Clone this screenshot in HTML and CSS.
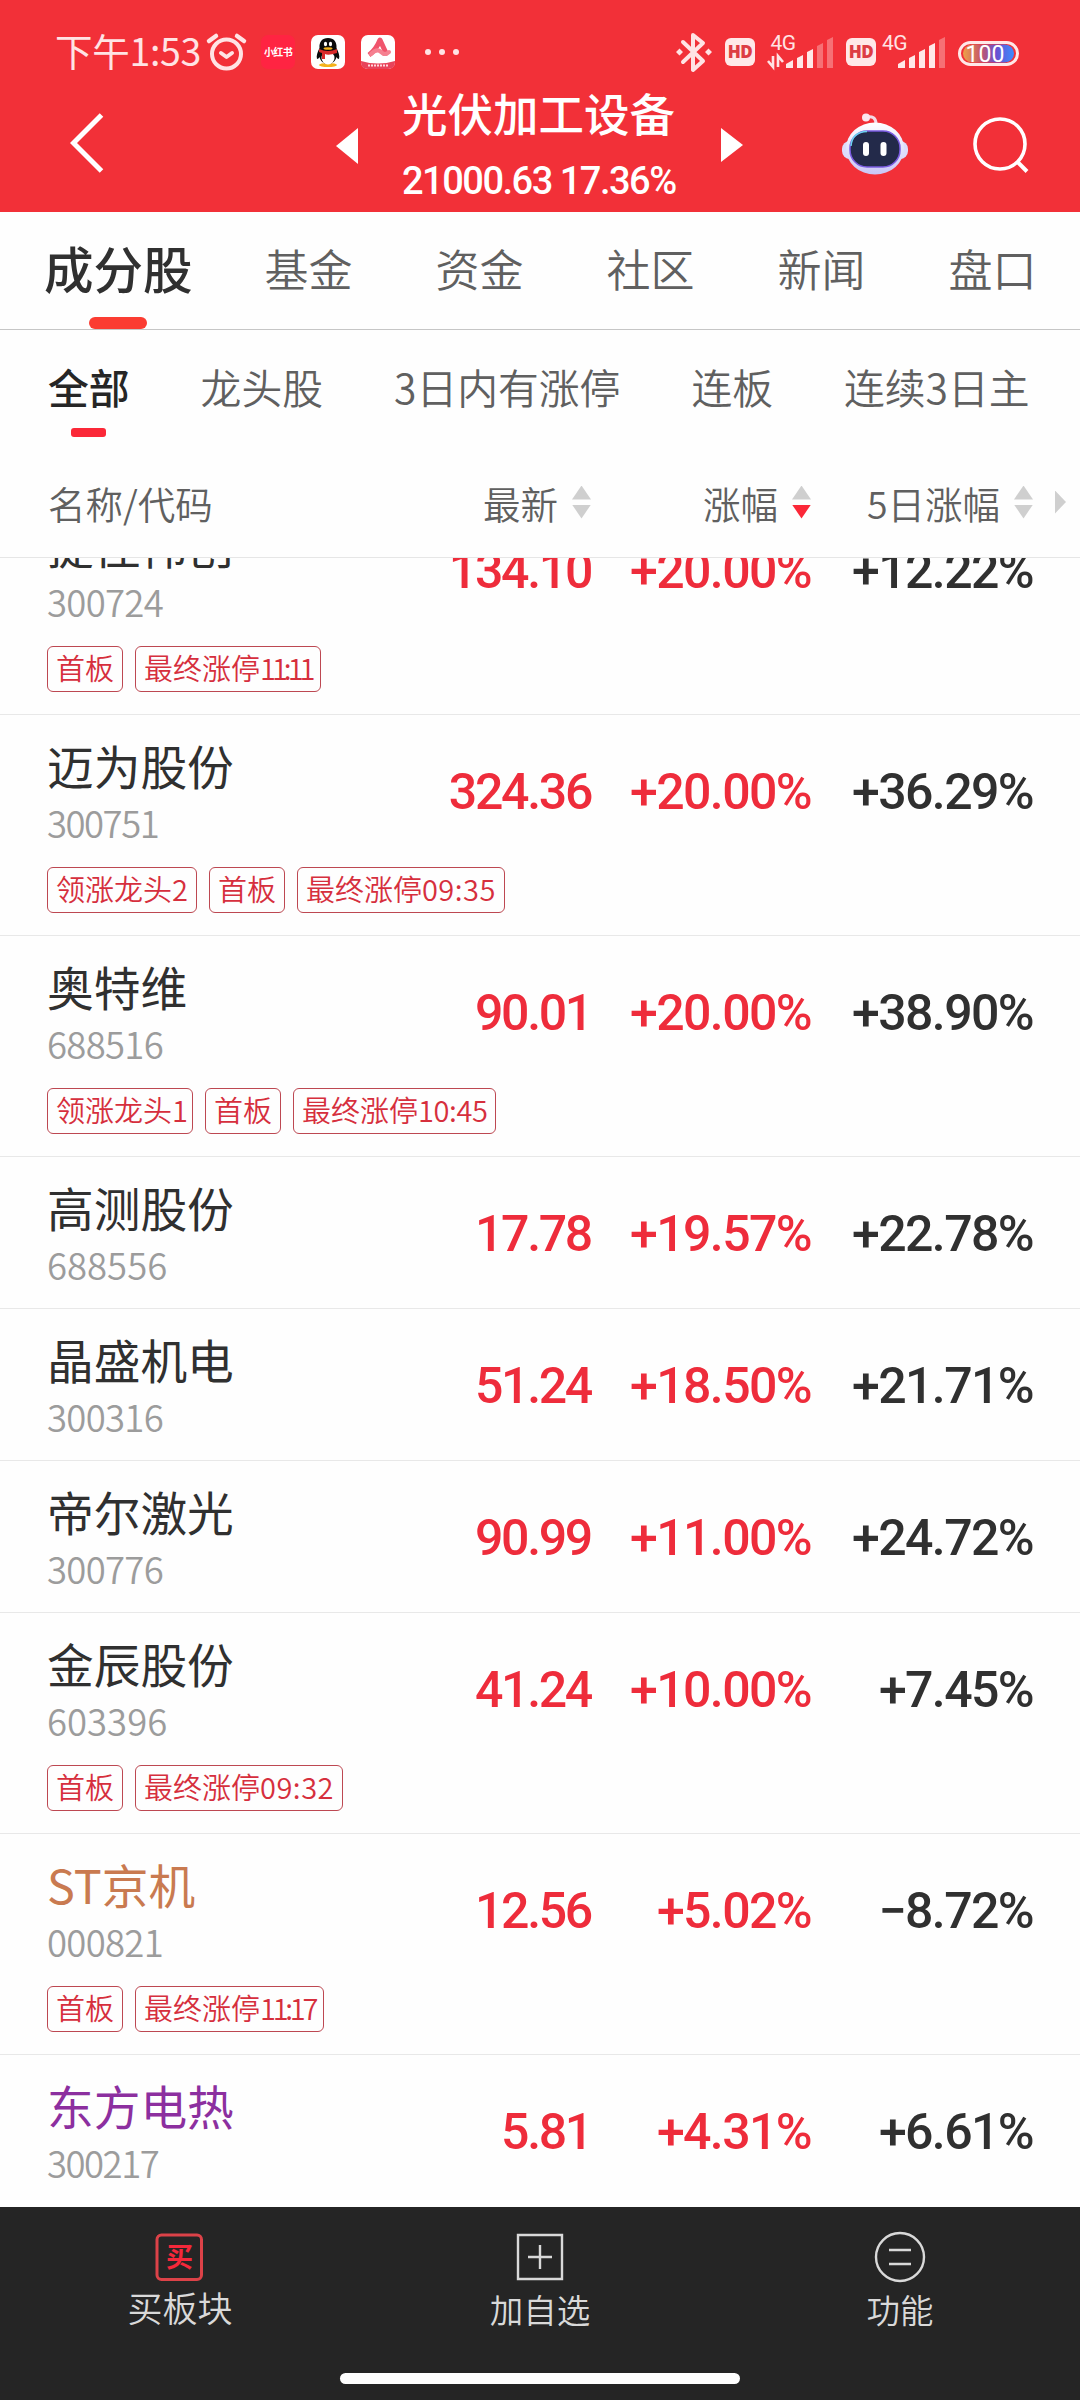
FILE: index.html
```html
<!DOCTYPE html>
<html lang="zh-CN">
  <head>
    <meta charset="UTF-8" />
    <meta name="viewport" content="width=device-width, initial-scale=1.0" />
    <title>光伏加工设备</title>
    <link rel="stylesheet" href="styles.css">
  </head>
  <body>
    <div class="header">
      <!-- status bar -->
      <div class="status">
        <span class="time">下午1:53</span>
        <svg class="status-left" width="260" height="44" viewBox="204 30 260 44">
          <g fill="none" stroke="#ffe3e4" stroke-width="4" stroke-linecap="round" stroke-linejoin="round">
            <circle cx="226.500" cy="54" r="14.500" />
            <path d="M209 41l7-5M244 41l-7-5" stroke-width="4.500" />
            <path d="M221 53l5.500 4 5.500-4" />
          </g>
          <rect x="261" y="35" width="34" height="34" rx="7" fill="#ff2442" />
          <text x="278" y="56" class="xhs">小红书</text>
          <rect x="311" y="35" width="34" height="34" rx="7" fill="#fff" />
          <ellipse cx="328" cy="65" rx="9" ry="2" fill="#f5b21a" />
          <path d="M328 38c-6 0-9 4-8.500 10-2 4-3.500 8-2.500 11 1 0 2-1 2.500-2 1 4 4 7 8.500 7s7.500-3 8.500-7c.5 1 1.500 2 2.500 2 1-3-.5-7-2.500-11 .5-6-2.500-10-8.500-10z" fill="#0b0b0b" />
          <ellipse cx="328" cy="58" rx="6.500" ry="6.500" fill="#fff" />
          <path d="M319 49q9 4 18 0v4q-9 3-12 1v5h-3v-6l-3-1z" fill="#d92b2b" />
          <ellipse cx="325.500" cy="44" rx="1.600" ry="2.200" fill="#fff" />
          <ellipse cx="330.500" cy="44" rx="1.600" ry="2.200" fill="#fff" />
          <ellipse cx="328" cy="48.500" rx="4.500" ry="1.300" fill="#f5b21a" />
          <rect x="361" y="35" width="34" height="34" rx="7" fill="#fff" />
          <path d="M361 61q17 5 34 0v1q0 7-7 7h-20q-7 0-7-7z" fill="#e8435a" />
          <path d="M369 55q7-5 11-15l6 13" fill="none" stroke="#f0546c" stroke-width="5" stroke-linejoin="round" />
          <path d="M371 54q6-6 10-2t8 0" fill="none" stroke="#f58090" stroke-width="4" stroke-linecap="round" />
          <path d="M368 65.500h20" stroke="#ffd9dd" stroke-width="2" stroke-dasharray="2 1" />
          <g fill="#ffe3e4">
            <circle cx="428" cy="52" r="3" />
            <circle cx="442" cy="52" r="3" />
            <circle cx="456" cy="52" r="3" />
          </g>
        </svg>
        <svg class="status-right" width="350" height="44" viewBox="674 30 350 44">
          <defs>
            <linearGradient id="power" x1="0" x2="1" y1="0" y2="0">
              <stop offset="0" stop-color="#eea148" />
              <stop offset="0.350" stop-color="#c5566a" />
              <stop offset="0.650" stop-color="#6a50d0" />
              <stop offset="1" stop-color="#3c8cff" />
            </linearGradient>
          </defs>
          <path d="M683 42l20 19-10 9V35l10 8-20 19" fill="none" stroke="#ffe3e4" stroke-width="4" stroke-linejoin="round" stroke-linecap="round" />
          <path d="M676 52l3.500-3.500 3.500 3.500-3.500 3.500zM705 52l3.500-3.500 3.500 3.500-3.500 3.500z" fill="#ffe3e4" />
          <rect x="725" y="38" width="30" height="28" rx="6" fill="#ffe8e8" />
          <text x="740" y="58" class="hd">HD</text>
          <text x="770.500" y="50" class="net">4G</text>
          <path d="M768 61l5 6V56M778 67V56l5 6" fill="none" stroke="#ffe3e4" stroke-width="2.600" />
          <g fill="#ffe8e8">
            <path d="M786 64l7-4v8h-7zM797 58l6-3v13h-6zM807 52l6-3v19h-6z" />
            <path d="M817 46l6-3v25h-6zM827 40l6-3v31h-6z" opacity=".35" />
          </g>
          <rect x="846" y="38" width="30" height="28" rx="6" fill="#ffe8e8" />
          <text x="861" y="58" class="hd">HD</text>
          <text x="882" y="50" class="net">4G</text>
          <g fill="#ffe8e8">
            <path d="M898 64l7-4v8h-7zM909 58l6-3v13h-6zM919 52l6-3v19h-6zM929 46l6-3v25h-6z" />
            <path d="M939 40l6-3v31h-6z" opacity=".35" />
          </g>
          <rect x="959.500" y="42.500" width="58" height="22" rx="11" fill="none" stroke="#ffe8e8" stroke-width="3" />
          <rect x="963" y="44.500" width="51" height="18" rx="9" fill="url(#power)" />
          <text x="985" y="61.500" class="power">100</text>
        </svg>
      </div>
      <!-- title bar -->
      <div class="titlebar">
        <svg class="back" width="34" height="62" viewBox="0 0 34 62">
          <path d="M31.500 3L3.500 31l28 28" fill="none" stroke="#fff" stroke-width="5" />
        </svg>
        <svg class="prev" width="22" height="36" viewBox="0 0 22 36"><path d="M22 0v36L0 18z" fill="#fff" /></svg>
        <div class="title">
          <h1>光伏加工设备</h1>
          <p>21000.63 17.36%</p>
        </div>
        <svg class="next" width="22" height="34" viewBox="0 0 22 34"><path d="M0 0v34l22-17z" fill="#fff" /></svg>
        <svg class="robot" width="66" height="62" viewBox="0 0 66 62">
          <defs>
            <linearGradient id="shell" x1="0" x2="0" y1="0" y2="1">
              <stop offset="0" stop-color="#ffffff" />
              <stop offset="1" stop-color="#c9c6f6" />
            </linearGradient>
          </defs>
          <path d="M24 4q10-2 10 7" fill="none" stroke="#f3d9e6" stroke-width="3" />
          <circle cx="24" cy="4.500" r="4" fill="#fbe6ee" />
          <rect x="0" y="28" width="66" height="18" rx="8" fill="#dcdcfb" />
          <ellipse cx="33" cy="35.500" rx="29" ry="26" fill="url(#shell)" />
          <rect x="8" y="18" width="50" height="36" rx="17" fill="#232a4a" stroke="#7a5be0" stroke-width="1.500" />
          <path d="M9 33q1-14 16-14.500" fill="none" stroke="#6bd3ef" stroke-width="1.500" />
          <rect x="21" y="29" width="6" height="14" rx="3" fill="#fff" />
          <rect x="38.500" y="29" width="6" height="14" rx="3" fill="#fff" />
        </svg>
        <svg class="search" width="56" height="56" viewBox="0 0 56 56">
          <circle cx="27" cy="27" r="25" fill="none" stroke="#fff" stroke-width="3.600" />
          <path d="M43.500 44l10.500 10.500" stroke="#fff" stroke-width="4" />
        </svg>
      </div>
    </div>

    <div class="tabs">
      <div class="tab active">成分股</div>
      <div class="tab">基金</div>
      <div class="tab">资金</div>
      <div class="tab">社区</div>
      <div class="tab">新闻</div>
      <div class="tab">盘口</div>
    </div>

    <div class="filters">
      <div class="filter active">全部</div>
      <div class="filter">龙头股</div>
      <div class="filter">3日内有涨停</div>
      <div class="filter">连板</div>
      <div class="filter">连续3日主</div>
    </div>

    <div class="columns">
      <span class="col-name">名称/代码</span>
      <span class="col price">最新<i class="sort"></i></span>
      <span class="col change">涨幅<i class="sort down"></i></span>
      <span class="col five">5日涨幅<i class="sort"></i></span>
      <i class="more"></i>
    </div>

    <div class="list">
      <div class="row tall first">
        <div class="stock">
          <div class="name">捷佳伟创</div>
          <div class="code">300724</div>
          <div class="tags"><span>首板</span><span>最终涨停<b class="t-1111">11:11</b></span></div>
        </div>
        <div class="num price">134.10</div>
        <div class="num change">+20.00%</div>
        <div class="num five">+12.22%</div>
      </div>
      <div class="row tall">
        <div class="stock">
          <div class="name">迈为股份</div>
          <div class="code c5">300751</div>
          <div class="tags"><span>领涨龙头2</span><span>首板</span><span>最终涨停<b>09:35</b></span></div>
        </div>
        <div class="num price">324.36</div>
        <div class="num change">+20.00%</div>
        <div class="num five">+36.29%</div>
      </div>
      <div class="row tall">
        <div class="stock">
          <div class="name">奥特维</div>
          <div class="code">688516</div>
          <div class="tags"><span>领涨龙头<b class="t-one">1</b></span><span>首板</span><span>最终涨停<b class="t-1045">10:45</b></span></div>
        </div>
        <div class="num price">90.01</div>
        <div class="num change">+20.00%</div>
        <div class="num five">+38.90%</div>
      </div>
      <div class="row">
        <div class="stock">
          <div class="name">高测股份</div>
          <div class="code c6">688556</div>
        </div>
        <div class="num price">17.78</div>
        <div class="num change">+19.57%</div>
        <div class="num five">+22.78%</div>
      </div>
      <div class="row">
        <div class="stock">
          <div class="name">晶盛机电</div>
          <div class="code">300316</div>
        </div>
        <div class="num price">51.24</div>
        <div class="num change">+18.50%</div>
        <div class="num five">+21.71%</div>
      </div>
      <div class="row">
        <div class="stock">
          <div class="name">帝尔激光</div>
          <div class="code">300776</div>
        </div>
        <div class="num price">90.99</div>
        <div class="num change">+11.00%</div>
        <div class="num five">+24.72%</div>
      </div>
      <div class="row tall">
        <div class="stock">
          <div class="name">金辰股份</div>
          <div class="code c6">603396</div>
          <div class="tags"><span>首板</span><span>最终涨停<b>09:32</b></span></div>
        </div>
        <div class="num price">41.24</div>
        <div class="num change">+10.00%</div>
        <div class="num five">+7.45%</div>
      </div>
      <div class="row tall">
        <div class="stock">
          <div class="name st">ST京机</div>
          <div class="code">000821</div>
          <div class="tags"><span>首板</span><span>最终涨停<b class="t-1117">11:17</b></span></div>
        </div>
        <div class="num price">12.56</div>
        <div class="num change">+5.02%</div>
        <div class="num five">−8.72%</div>
      </div>
      <div class="row last">
        <div class="stock">
          <div class="name purple">东方电热</div>
          <div class="code c5">300217</div>
        </div>
        <div class="num price">5.81</div>
        <div class="num change">+4.31%</div>
        <div class="num five">+6.61%</div>
      </div>
    </div>

    <div class="bottom">
      <div class="actions">
        <div class="action buy">
          <svg width="52" height="52" viewBox="0 0 52 52">
            <rect x="3" y="4" width="44.500" height="44.500" rx="4.500" fill="none" stroke="#dc4248" stroke-width="3" />
            <text x="25.500" y="36">买</text>
          </svg>
          <span>买板块</span>
        </div>
        <div class="action">
          <svg width="52" height="52" viewBox="0 0 52 52">
            <path d="M4 4h44v44H4zM14 26h24M26 14v24" fill="none" stroke="#d9d9d9" stroke-width="2.400" />
          </svg>
          <span>加自选</span>
        </div>
        <div class="action">
          <svg width="52" height="52" viewBox="0 0 52 52">
            <circle cx="26" cy="26" r="24" fill="none" stroke="#d9d9d9" stroke-width="2.400" />
            <path d="M15 19h22M15 33h22" stroke="#d9d9d9" stroke-width="2.600" />
          </svg>
          <span>功能</span>
        </div>
      </div>
      <div class="home"></div>
    </div>
  </body>
</html>
```
FILE: styles.css
```css
* {
  box-sizing: border-box;
  margin: 0;
  padding: 0;
}

body {
  width: 1080px;
  height: 2400px;
  overflow: hidden;
  background: #fefefe;
  color: #303030;
  font-family: "Noto Sans CJK SC", sans-serif;
  white-space: nowrap;
}

svg {
  display: block;
  flex: none;
}

/* header */
.header {
  height: 212px;
  background: #f23038;
  color: #fff;
}

.status {
  display: flex;
  height: 92px;
  padding: 30px 0 0 55px;
}

.time {
  width: 149px;
  font-size: 37.5px;
  line-height: 40px;
  letter-spacing: -0.3px;
  color: #ffe3e4;
}

.status-right {
  margin-left: 210px;
}

.xhs {
  font-size: 10px;
  font-weight: bold;
  fill: #fff;
  text-anchor: middle;
  letter-spacing: -0.7px;
}

.hd {
  font-family: "Open Sans", sans-serif;
  font-size: 17px;
  font-weight: 800;
  fill: #dd3d44;
  text-anchor: middle;
  letter-spacing: -0.5px;
}

.net {
  font-family: Roboto, sans-serif;
  font-size: 21px;
  fill: #ffe3e4;
  letter-spacing: -0.5px;
}

.power {
  font-family: Roboto, sans-serif;
  font-size: 23px;
  fill: #fff;
  text-anchor: middle;
}

.titlebar {
  display: flex;
  align-items: flex-start;
}

.back {
  margin: 20px 0 0 70px;
}

.prev {
  margin: 36px 0 0 232px;
}

.title {
  width: 276px;
  margin: -3px 0 0 44px;
}

.title h1 {
  font-size: 45.5px;
  line-height: 46px;
  font-weight: 500;
}

.title p {
  margin-top: 26px;
  font-family: Roboto, sans-serif;
  font-size: 38px;
  line-height: 40px;
  font-weight: 500;
  letter-spacing: -1.5px;
}

.next {
  margin: 36px 0 0 43px;
}

.robot {
  margin: 21px 0 0 99px;
}

.search {
  margin: 25px 0 0 65px;
}

/* tabs */
.tabs {
  display: flex;
  height: 118px;
  padding-left: 44px;
  border-bottom: 1px solid #c6c6c6;
}

.tab {
  margin-right: 83px;
  padding-top: 33px;
  font-size: 44px;
  line-height: 46px;
  font-weight: 350;
  color: #606060;
}

.tab.active {
  display: flex;
  flex-direction: column;
  justify-content: space-between;
  align-items: center;
  margin-right: 72px;
  font-size: 49.5px;
  font-weight: 500;
  color: #303030;
}

.tab.active::after {
  content: "";
  width: 58px;
  height: 12px;
  border-radius: 6px;
  background: #fb3c32;
}

.filters {
  display: flex;
  height: 122px;
  padding: 37px 0 0 48px;
}

.filter {
  margin-right: 71px;
  font-size: 40.8px;
  line-height: 40px;
  font-weight: 350;
  color: #606060;
}

.filter.active {
  font-weight: 500;
  color: #262626;
}

.filter.active::after {
  content: "";
  display: block;
  width: 35px;
  height: 9px;
  margin: 21px auto 0;
  border-radius: 3px;
  background: #fb2838;
}

/* column titles */
.columns {
  display: flex;
  align-items: center;
  height: 106px;
  padding: 0 0 5px 48px;
  border-bottom: 1px solid #e6e6e6;
  font-size: 37.5px;
  font-weight: 350;
  color: #606060;
}

.col-name {
  width: 322px;
}

.col {
  display: flex;
  justify-content: flex-end;
  align-items: center;
}

.price {
  width: 221px;
}

.change {
  width: 220px;
}

.five {
  width: 222px;
}

.sort {
  width: 19px;
  margin-left: 14px;
}

.sort::before,
.sort::after {
  content: "";
  display: block;
  height: 14px;
  background: #cfcfcf;
  clip-path: polygon(50% 0, 100% 100%, 0 100%);
}

.sort::after {
  margin-top: 5px;
  clip-path: polygon(0 0, 100% 0, 50% 100%);
}

.sort.down::after {
  background: #fb2838;
}

.more {
  width: 11px;
  height: 23px;
  margin-left: 22px;
  background: #cfcfcf;
  clip-path: polygon(0 0, 100% 50%, 0 100%);
}

/* stock list */
.list {
  height: 1649px;
  overflow: hidden;
}

.row {
  display: flex;
  height: 152px;
  border-bottom: 1px solid #e8e8e8;
}

.row.tall {
  height: 221px;
}

.row.first {
  margin-top: -64px;
}

.row.last {
  border-bottom: 0;
}

.stock {
  width: 370px;
  padding: 20px 0 0 47px;
}

.name {
  font-size: 46.7px;
  line-height: 59px;
  font-weight: 400;
}

.name.st {
  color: #c97a50;
}

.name.purple {
  color: #8c2f9f;
}

.code {
  margin-top: 9px;
  font-size: 36.5px;
  line-height: 40px;
  font-weight: 350;
  letter-spacing: -0.7px;
  color: #9c9c9c;
}

.code.c5 {
  letter-spacing: -1.5px;
}

.code.c6 {
  letter-spacing: 0;
}

.tags {
  display: flex;
  gap: 12px;
  margin-top: 24px;
}

.tags span {
  height: 46px;
  padding: 0 8px;
  border: 1px solid #bd4852;
  border-radius: 6px;
  font-size: 29px;
  line-height: 41px;
  font-weight: 350;
  color: #d62f3d;
}

.tags b {
  font-weight: 350;
  letter-spacing: 0.5px;
}

.tags .t-1111 {
  letter-spacing: -4px;
}

.tags .t-1117 {
  letter-spacing: -3.3px;
}

.tags .t-1045 {
  letter-spacing: -0.4px;
}

.tags .t-one {
  letter-spacing: -4px;
}

.num {
  padding-top: 47px;
  font-family: Roboto, sans-serif;
  font-size: 50px;
  line-height: 60px;
  font-weight: 500;
  letter-spacing: -1.6px;
  text-align: right;
  color: #ee2c3b;
}

.num.price {
  letter-spacing: -2.3px;
}

.num.five {
  color: #303030;
}

/* bottom bar */
.bottom {
  height: 193px;
  background: #252525;
}

.actions {
  display: flex;
  height: 166px;
}

.action {
  display: flex;
  flex-direction: column;
  align-items: center;
  width: 360px;
  padding-top: 24px;
  font-size: 33.5px;
  line-height: 40px;
  font-weight: 350;
  color: #d9d9d9;
}

.action span {
  margin-top: 6px;
}

.action.buy {
  font-size: 35px;
}

.action.buy span {
  margin-top: 4px;
}

.action text {
  font-size: 27px;
  font-weight: bold;
  fill: #f4283a;
  text-anchor: middle;
}

.home {
  width: 400px;
  height: 11px;
  margin: 0 auto;
  border-radius: 6px;
  background: #fff;
}
```
